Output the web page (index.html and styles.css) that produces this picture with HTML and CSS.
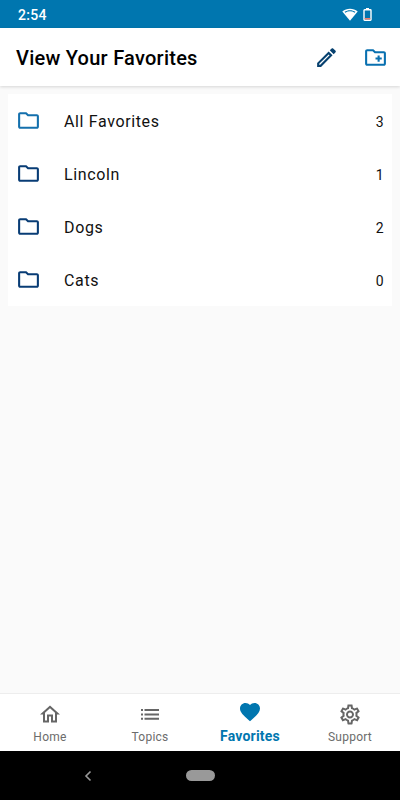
FILE: index.html
```html
<!DOCTYPE html>
<html lang="en">
<head>
<meta charset="utf-8">
<title>View Your Favorites</title>
<link rel="stylesheet" href="styles.css">
</head>
<body>
<svg class="defs" width="0" height="0">
  <symbol id="folder" viewBox="0 0 24 24"><path d="M9.17 6l2 2H20v10H4V6h5.17M10 4H4c-1.1 0-1.99.9-1.99 2L2 18c0 1.1.9 2 2 2h16c1.1 0 2-.9 2-2V8c0-1.1-.9-2-2-2h-8l-2-2z"/></symbol>
</svg>
<div class="status">
  <span class="time">2:54</span>
  <svg class="wifi" viewBox="0 0 16 13"><path d="M8 12.800L.3 3.400C4.700-.2 11.300-.2 15.700 3.400z" fill="#fff"/><path d="M2.600 3.800C5.700 1.600 10.300 1.600 13.400 3.800L12.700 4.700C9.800 2.900 6.200 2.900 3.300 4.700z" fill="#0076af"/></svg>
  <svg class="battery" viewBox="0 0 9 13"><path d="M3 0h3v1.500H3z" fill="#fff"/><rect x="1" y="1.800" width="7" height="10.400" rx=".6" fill="none" stroke="#fff" stroke-width="1.400"/><path d="M1.700 10h5.600v1.500H1.700z" fill="#ef7a68"/></svg>
</div>
<header class="appbar">
  <h1>View Your Favorites</h1>
  <svg class="icon pencil" viewBox="0 0 24 24"><path d="M14.060 9.020l.92.92L5.920 19H5v-.92l9.060-9.060M17.660 3c-.25 0-.51.1-.7.290l-1.830 1.830 3.750 3.750 1.830-1.830c.39-.39.39-1.020 0-1.410l-2.340-2.340c-.2-.2-.45-.29-.68-.29zm-3.600 3.190L3 17.250V21h3.750L17.810 9.940l-3.750-3.750z"/></svg>
  <svg class="icon blue" viewBox="0 0 24 24"><path d="M20 6h-8l-2-2H4c-1.110 0-1.990.89-1.990 2L2 18c0 1.110.89 2 2 2h16c1.110 0 2-.89 2-2V8c0-1.110-.89-2-2-2zm0 12H4V6h5.170l2 2H20v10zm-8-4h2v2h2v-2h2v-2h-2v-2h-2v2h-2z"/></svg>
</header>
<main>
  <ul class="list">
    <li><svg class="icon all"><use href="#folder"/></svg><span class="name">All Favorites</span><span class="count">3</span></li>
    <li><svg class="icon"><use href="#folder"/></svg><span class="name">Lincoln</span><span class="count">1</span></li>
    <li><svg class="icon"><use href="#folder"/></svg><span class="name">Dogs</span><span class="count">2</span></li>
    <li><svg class="icon"><use href="#folder"/></svg><span class="name">Cats</span><span class="count">0</span></li>
  </ul>
</main>
<nav class="tabs">
  <div class="tab"><svg viewBox="0 -.5 24 24"><path d="M12 5.690l5 4.500V18h-2v-6H9v6H7v-7.810l5-4.500M12 3L2 12h3v8h6v-6h2v6h6v-8h3L12 3z"/></svg><span>Home</span></div>
  <div class="tab"><svg viewBox="0 -.4 24 24"><path d="M3 6.600h2v2H3zM3 11h2v2H3zM3 15.400h2v2H3zM6.500 6.600H21v2H6.500zM6.500 11H21v2H6.500zM6.500 15.400H21v2H6.500z"/></svg><span>Topics</span></div>
  <div class="tab active"><svg viewBox="0 0 24 24"><path d="M12 21.350l-1.450-1.320C5.400 15.360 2 12.280 2 8.500 2 5.420 4.420 3 7.500 3c1.740 0 3.410.81 4.500 2.090C13.090 3.810 14.760 3 16.500 3 19.580 3 22 5.420 22 8.500c0 3.780-3.400 6.860-8.550 11.540L12 21.350z"/></svg><span>Favorites</span></div>
  <div class="tab"><svg viewBox="0 -.4 24 24"><path d="M19.430 12.980c.04-.32.07-.64.07-.98s-.03-.66-.07-.98l2.110-1.650c.19-.15.24-.42.12-.64l-2-3.460c-.09-.16-.26-.25-.44-.25-.06 0-.12.010-.17.030l-2.490 1c-.52-.4-1.080-.73-1.690-.98l-.38-2.650C14.460 2.180 14.250 2 14 2h-4c-.25 0-.46.18-.49.42l-.38 2.650c-.61.25-1.170.59-1.690.98l-2.490-1c-.06-.02-.12-.03-.18-.03-.17 0-.34.090-.43.250l-2 3.460c-.13.22-.07.49.12.64l2.110 1.650c-.04.32-.07.65-.07.98s.03.66.07.98l-2.110 1.650c-.19.15-.24.42-.12.64l2 3.460c.09.16.26.25.44.25.06 0 .12-.01.17-.03l2.490-1c.52.4 1.080.73 1.690.98l.38 2.650c.03.24.24.42.49.42h4c.25 0 .46-.18.49-.42l.38-2.650c.61-.25 1.170-.59 1.690-.98l2.490 1c.06.02.12.030.18.030.17 0 .34-.09.43-.25l2-3.460c.12-.22.07-.49-.12-.64l-2.110-1.650zm-1.980-1.710c.04.31.05.52.05.73s-.02.43-.05.73l-.14 1.130.89.7 1.080.84-.7 1.210-1.270-.51-1.040-.42-.9.68c-.43.32-.84.56-1.250.73l-1.060.43-.16 1.130-.2 1.350h-1.400l-.19-1.350-.16-1.130-1.060-.43c-.43-.18-.83-.41-1.230-.71l-.91-.7-1.060.43-1.270.51-.7-1.210 1.080-.84.89-.7-.14-1.130c-.03-.31-.05-.54-.05-.74s.02-.43.05-.73l.14-1.130-.89-.7-1.080-.84.7-1.210 1.270.51 1.040.42.9-.68c.43-.32.84-.56 1.250-.73l1.060-.43.16-1.130.2-1.350h1.390l.19 1.350.16 1.130 1.060.43c.43.18.83.41 1.230.71l.91.7 1.060-.43 1.270-.51.7 1.210-1.070.85-.89.7.14 1.130zM12 8c-2.210 0-4 1.790-4 4s1.790 4 4 4 4-1.790 4-4-1.790-4-4-4zm0 6c-1.100 0-2-.9-2-2s.9-2 2-2 2 .9 2 2-.9 2-2 2z"/></svg><span>Support</span></div>
</nav>
<footer class="system">
  <svg class="back" viewBox="0 0 8 12"><path d="M6.500 1.500L2 6l4.500 4.500" fill="none" stroke="#999" stroke-width="1.600"/></svg>
  <span class="pill"></span>
</footer>
</body>
</html>
```
FILE: styles.css
```css
* { box-sizing: border-box; }
body {
  margin: 0;
  width: 400px;
  height: 800px;
  display: flex;
  flex-direction: column;
  overflow: hidden;
  background: #fafafa;
  color: #000;
  font-family: Roboto, sans-serif;
}
.defs { position: absolute; }
.status {
  height: 28px;
  flex: none;
  display: flex;
  align-items: center;
  padding: 0 28px 0 18px;
  background: #0076af;
  color: #fff;
}
.time { flex: 1; padding-top: 1px; font-size: 14px; font-weight: 500; letter-spacing: .3px; }
.wifi { width: 16px; height: 13px; margin-right: 5px; }
.battery { width: 9px; height: 13px; }
.appbar {
  height: 58px;
  flex: none;
  display: flex;
  align-items: center;
  padding: 0 12px 0 16px;
  background: #fff;
  box-shadow: 0 1px 3px rgba(0, 0, 0, .15);
  z-index: 1;
}
h1 { flex: 1; margin: 0; padding-top: 2px; font-size: 20px; font-weight: 500; line-height: 24px; letter-spacing: .25px; }
.icon { width: 25px; height: 25px; flex: none; fill: #083c75; }
.pencil { margin-right: 24px; fill: #07416f; }
.blue { fill: #0870b0; }
.all { fill: #1470ad; }
main { flex: 1; padding: 8px 8px 0; }
.list { margin: 0; padding: 0; list-style: none; background: #fff; }
.list li { height: 53px; display: flex; align-items: center; padding: 0 8px; color: #111; }
.name { flex: 1; margin-left: 23px; padding-top: 2px; font-size: 16px; letter-spacing: .63px; }
.count { padding-top: 2px; font-size: 14px; letter-spacing: .3px; }
.tabs {
  height: 58px;
  flex: none;
  display: flex;
  background: #fff;
  border-top: 1px solid #ededed;
}
.tab {
  flex: 1;
  display: flex;
  flex-direction: column;
  align-items: center;
  padding-top: 8px;
  color: #6c6c6c;
  font-size: 12px;
  line-height: 16px;
  letter-spacing: .25px;
}
.tab svg { width: 24px; height: 24px; fill: #666; margin-bottom: 3px; }
.active { padding-top: 6px; color: #0076af; font-size: 14px; font-weight: 700; letter-spacing: .2px; }
.active svg { fill: #0076af; margin-bottom: 4px; }
.system {
  height: 49px;
  flex: none;
  display: flex;
  align-items: center;
  background: #000;
}
.back { width: 8px; height: 12px; margin-left: 84px; }
.pill { width: 29px; height: 11px; margin-left: 94px; border-radius: 6px; background: #999; }
```
